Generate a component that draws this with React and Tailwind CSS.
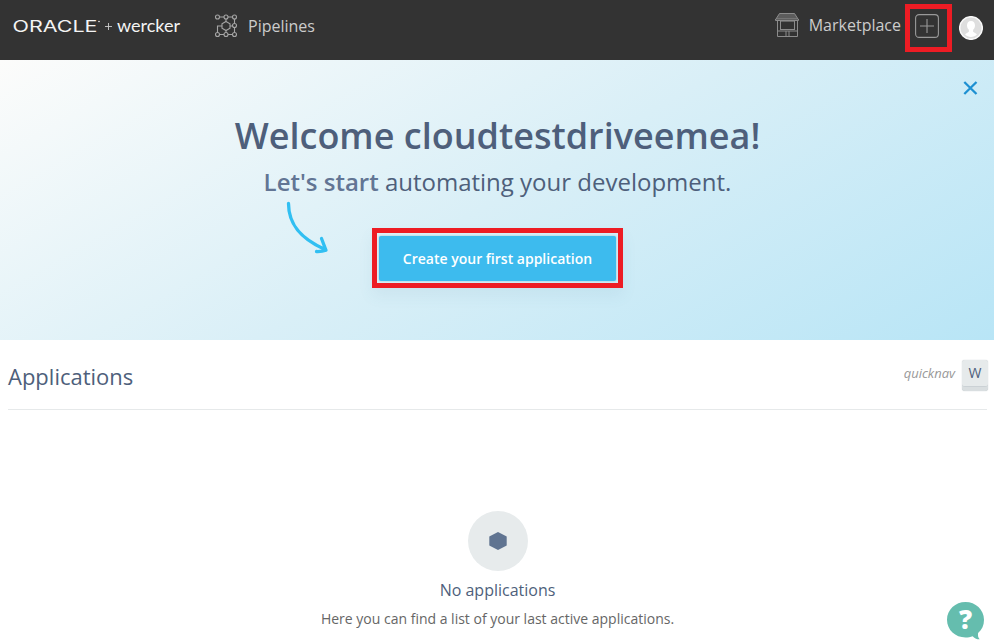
function PipelinesIcon() {
  return (
    <svg className="block h-6 w-6 shrink-0" viewBox="0 0 24 24" fill="none" stroke="#a6a6a6" strokeWidth="1.1">
      <path d="M6 3h4M14 3h4M20.500 5v4M20.500 13v5M6 20.500h4M14 20.500h4M3.500 18.500V12H8M12 5v2.500M12 16.500v2M16 12h2.500" />
      <path d="M12 7.500l4 2.300v4.400l-4 2.300-4-2.300V9.800z" />
      {[[3.5, 3], [12, 3], [20.5, 3], [20.5, 11.5], [3.5, 20.5], [12, 20.5], [20.5, 20.5]].map(([x, y]) => (
        <circle key={`${x}-${y}`} cx={x} cy={y} r="2" />
      ))}
    </svg>
  );
}

function StoreIcon() {
  return (
    <svg className="block h-6 w-6 shrink-0" viewBox="0 0 24 24" fill="none" stroke="#8c8c8c">
      <path d="M4.500 .500h15l3.500 5.500H1z" fill="#5c5c5c" />
      <path d="M.500 6v1.500h23V6M2.500 8v15.500h20V8M5.500 8v9M19.500 8v9M5.500 16.500h14M2.500 18h20M11 18v5.500M14 18v5.500" />
      <path d="M6 8.500h13" stroke="#666666" />
    </svg>
  );
}

function Logo() {
  return (
    <svg className="block h-[60px] w-[190px] shrink-0" viewBox="0 0 190 60" fill="#f4f4f4">
      <text x="12.500" y="31.700" fontFamily="Inter, sans-serif" fontSize="15.3" fontWeight="400" textLength="85" lengthAdjust="spacingAndGlyphs">ORACLE</text>
      <circle cx="99" cy="21.500" r=".8" />
      <path d="M105 26.500h7M108.500 23v7" stroke="#cccccc" strokeWidth=".9" />
      <text x="117" y="31.700" fontFamily="Lato, sans-serif" fontSize="18" textLength="63" lengthAdjust="spacingAndGlyphs">wercker</text>
    </svg>
  );
}

export default function App() {
  return (
    <div className="relative flex h-[643px] w-[994px] flex-col overflow-hidden bg-white font-['Open_Sans',sans-serif] text-[#4e5f7b]">
      <header className="flex h-[60px] shrink-0 items-start bg-[#333333] text-[#cccccc]">
        <Logo />
        <div className="ml-6 flex h-[52px] items-center gap-[10px]">
          <PipelinesIcon />
          <span className="text-base">Pipelines</span>
        </div>
        <div className="ml-auto flex h-[50px] items-center gap-[10px]">
          <StoreIcon />
          <span className="text-base">Marketplace</span>
        </div>
        <div className="ml-1 mt-1 flex h-12 w-[47px] items-start border-[5px] border-[#ed1c24] pl-[5px] pt-[5px]">
          <svg className="block h-6 w-6" viewBox="0 0 24 24" fill="none" stroke="#999999" strokeWidth="1.1">
            <rect x=".6" y=".6" width="22.800" height="22.800" rx="3.500" />
            <path d="M5 12h14M12 5v14" />
          </svg>
        </div>
        <svg className="ml-[7px] mr-[11px] mt-4 block h-6 w-6" viewBox="0 0 24 24">
          <circle cx="12" cy="12" r="11.300" fill="#dedede" stroke="#f8f8f8" strokeWidth="1.500" />
          <path d="M12 5c-2.700 0-4 1.900-4 4.500 0 2 .8 3.300 1.900 4.300v2L6 18.200c2.800 3.600 9.200 3.600 12 0l-3.900-2.400v-2c1.100-1 1.900-2.300 1.900-4.300C16 6.900 14.700 5 12 5z" fill="#ffffff" />
        </svg>
      </header>

      <section className="relative flex h-[280px] shrink-0 flex-col items-center bg-[linear-gradient(150deg,#fcfcfb_0%,#d9eff7_50%,#b8e5f6_100%)]">
        <h1 className="mt-[50px] whitespace-nowrap pl-px text-4xl font-semibold leading-[52px]">Welcome cloudtestdriveemea!</h1>
        <p className="mt-[3px] whitespace-nowrap pl-px text-2xl leading-[34px]">
          <span className="font-semibold text-[#627594]">Let's start</span> automating your development.
        </p>
        <div className="mt-[29px] flex h-[60px] w-[251px] border-[5px] border-[#ed1c24] p-[2px] pt-[3px] shadow-[0_8px_14px_rgba(80,130,150,0.08)]">
          <button className="flex-1 whitespace-nowrap rounded-[2px] bg-[#3dbbee] pl-px text-sm font-semibold text-white shadow-[0_0_2px_#8cbdcc]">Create your first application</button>
        </div>
        <svg className="absolute left-[284px] top-[140px] h-[58px] w-[48px]" viewBox="0 0 48 58" fill="none" stroke="#31bff2" strokeWidth="3.300" strokeLinecap="round" strokeLinejoin="round">
          <path d="M4.500 3.500C4.500 27 20 40 40 49M37.500 38.500L42 50.300Q38 51.700 32.500 51.500" />
        </svg>
        <svg className="absolute left-[963px] top-[21px] h-[14px] w-[15px]" viewBox="0 0 15 14" stroke="#1d90d2" strokeWidth="2.300">
          <path d="M1.300 1l12.200 12M13.500 1L1.300 13" />
        </svg>
      </section>

      <main className="flex flex-1 flex-col pl-2 pr-[6px]">
        <div className="mr-px flex h-[70px] shrink-0 items-start border-b border-[#e6e9ea]">
          <h2 className="mt-[19px] text-[22px] leading-[34px]">Applications</h2>
          <span className="ml-auto mt-[23px] text-[13px] italic leading-5 text-[#999999]">quicknav</span>
          <kbd className="-mr-px ml-[7px] mt-5 h-[31px] w-[26px] rounded-[3px] bg-[#d9dee0] shadow-[0_0_1px_#aeb7bd]">
            <span className="flex h-[27px] items-start justify-center rounded-[3px] border-b border-[#cbd1d5] bg-[#e6eaeb] pt-[3px] font-['Open_Sans',sans-serif] text-sm leading-5">W</span>
          </kbd>
        </div>
        <div className="flex flex-col items-center pt-[101px]">
          <div className="flex h-[60px] w-[60px] items-center justify-center rounded-full bg-[#e7ebec]">
            <svg className="-ml-px h-[18px] w-[18px]" viewBox="0 0 18 18" fill="#607491"><path d="M9 0l8.700 4.600v8.800L9 18 .3 13.400V4.600z" /></svg>
          </div>
          <h3 className="mr-px mt-[7px] text-base leading-6">No applications</h3>
          <p className="mr-px mt-[6px] whitespace-nowrap text-sm leading-[22px] text-[#666666]">Here you can find a list of your last active applications.</p>
        </div>
      </main>

      <button className="absolute left-[947px] top-[601px] h-[40px] w-[38px]" aria-label="Help">
        <svg className="block h-10 w-[38px]" viewBox="0 0 38 40">
          <path d="M18.500 1C8.500 1 0 8.500 0 18.800S8.500 36.500 18.500 36.500c2.600 0 5-.5 7.200-1.300 1.600 2 4 3.200 7 3.100-1.600-1.700-2-3.900-1.600-6.300C35 28.700 37 24.200 37 18.800 37 8.500 28.500 1 18.500 1z" fill="#65bdae" />
          <text x="18.500" y="27.500" textAnchor="middle" fontFamily="Open Sans, sans-serif" fontSize="26" fontWeight="800" fill="#ffffff">?</text>
        </svg>
      </button>
    </div>
  );
}
